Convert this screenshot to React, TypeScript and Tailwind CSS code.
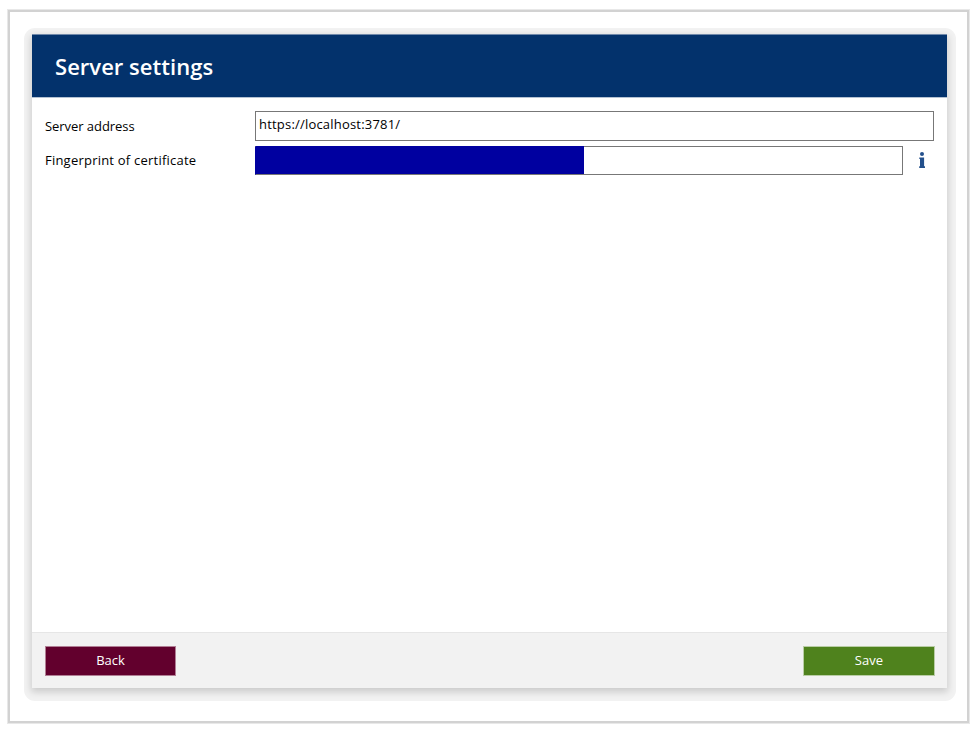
import { useState } from 'react';

function InfoIcon() {
  return (
    <svg viewBox="0 0 8 17" className="h-[17px] w-2" fill="#24508c" aria-hidden="true">
      <circle cx="4" cy="2.1" r="2" />
      <path d="M1.3 5.6h4.8v8.6H7V16H1.2v-1.8H2V7h-.7z" />
    </svg>
  );
}

export default function ServerSettings() {
  const [address, setAddress] = useState('https://localhost:3781/');
  const [fingerprint, setFingerprint] = useState('');

  return (
    <div className="h-[733px] w-[978px] bg-white pt-[9px] pl-[7px] font-['Open_Sans','Segoe_UI',sans-serif] text-[13px] text-black">
      <div className="h-[715px] w-[963px] border border-[#e8e8e8]">
        <div className="h-full border-2 border-[#d2d2d2] pt-4 pl-3.5">
          <div className="h-[673px] w-[932px] rounded-[11px] bg-[#f2f2f2] pt-1.5 pl-2">
            <div className="flex h-[654px] w-[915px] flex-col bg-white shadow-[0_3px_7px_1px_rgba(0,0,0,0.16)]">
              <header className="flex h-16 shrink-0 items-center border-t border-b border-t-[#7189aa] border-b-[#b4c2d3] bg-[#03326c] pb-px pl-[23px]">
                <h1 className="text-[22px] leading-[30px] font-semibold tracking-[0.03px] text-white">
                  Server settings
                </h1>
              </header>

              <main className="flex flex-1 flex-col gap-[5px] px-[13px] pt-[13px]">
                <div className="flex h-[30px] items-center">
                  <label htmlFor="address" className="w-[210px] shrink-0 pt-0.5 tracking-[-0.05px]">
                    Server address
                  </label>
                  <input
                    id="address"
                    value={address}
                    onChange={(e) => setAddress(e.target.value)}
                    className="h-[30px] min-w-0 flex-1 border border-[#777] bg-white px-[3px] pb-1 tracking-[0.2px] outline-none"
                  />
                </div>
                <div className="flex h-[29px] items-center">
                  <label htmlFor="fingerprint" className="w-[210px] shrink-0 tracking-[0.22px]">
                    Fingerprint of certificate
                  </label>
                  <div className="flex h-[29px] w-[648px] border border-[#777] border-l-[#0000a0]">
                    <div className="-mt-px w-[328px] shrink-0 bg-[#0000a0]" />
                    <input
                      id="fingerprint"
                      value={fingerprint}
                      onChange={(e) => setFingerprint(e.target.value)}
                      className="min-w-0 flex-1 px-[3px] outline-none"
                    />
                  </div>
                  <span className="ml-[15px]">
                    <InfoIcon />
                  </span>
                </div>
              </main>

              <footer className="flex h-14 shrink-0 justify-between border-t border-[#e6e6e6] bg-[#f2f2f2] pt-[13px] pr-3 pl-[13px]">
                <button className="h-[30px] w-[131px] border border-[#b17f95] bg-[#62002d] text-white">
                  Back
                </button>
                <button className="h-[30px] w-[132px] border border-[#b9cda5] bg-[#4f821d] tracking-[0.1px] text-white">
                  Save
                </button>
              </footer>
            </div>
          </div>
        </div>
      </div>
    </div>
  );
}
